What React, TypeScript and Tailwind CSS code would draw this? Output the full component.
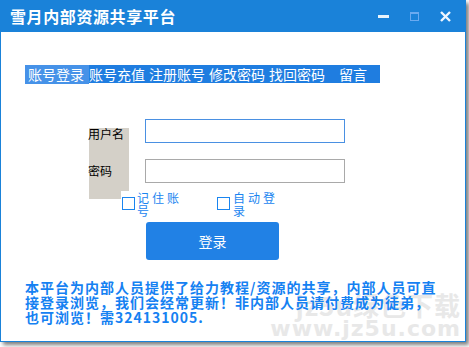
import { useState } from "react";

const tabs = ["账号充值", "注册账号", "修改密码", "找回密码"];

const App = () => {
  const [active] = useState("账号登录");
  const cjk = { fontFamily: '"Noto Sans CJK SC", "Noto Sans", sans-serif' };

  return (
    <div className="w-[469px] h-[347px] bg-white overflow-hidden" style={cjk}>
      <div className="relative w-[466px] h-[342px] flex flex-col bg-white border-x border-b border-[#1a82d9] shadow-[3px_3px_4px_rgba(0,0,0,0.5)]">
        {/* title bar */}
        <div className="h-[32px] shrink-0 bg-[#1a82d9] flex items-center justify-between pl-[9px] pr-[14px]">
          <span className="text-white text-[16px] font-bold tracking-[0.6px] leading-none">
            雪月内部资源共享平台
          </span>
          <div className="flex items-center gap-[21px]">
            <div className="w-[11px] h-[3px] bg-white/90" />
            <div className="w-[9px] h-[9px] border border-[#6aaaf0] border-t-[2px]" />
            <svg width="11" height="11" viewBox="0 0 11 11">
              <path d="M1 1 L10 10 M10 1 L1 10" stroke="#eef6ff" strokeWidth="2.4" />
            </svg>
          </div>
        </div>

        {/* tabs */}
        <div className="flex items-start mt-[33px] ml-[24px]">
          <div className="h-[19px] w-[64px] pl-[3px] bg-[#4692e8] text-white text-[14px] leading-[18px]">
            {active}
          </div>
          <div className="h-[18px] flex bg-[#1f7de0] text-white text-[14px] leading-[18px] pr-[13px]">
            {tabs.map((t, i) => (
              <span key={t} className={i === 0 ? "" : "ml-[4px]"}>
                {t}
              </span>
            ))}
            <span className="ml-[14px]">留言</span>
          </div>
        </div>

        {/* form */}
        <div className="flex items-start mt-[35px] ml-[88px]">
          <div className="mt-[9px] w-[40px] h-[71px] bg-[#d4d0c8] text-black text-[12px] leading-[14px]">
            <div className="-mt-[1px] -ml-[1px]">用户名</div>
            <div className="mt-[23px] -ml-[1px]">密码</div>
          </div>
          <div className="ml-[16px] flex flex-col">
            <input className="w-[200px] h-[24px] border border-[#4a90e2] outline-none px-1 text-[12px]" />
            <input
              type="password"
              className="mt-[16px] w-[200px] h-[24px] border border-[#a9a9a9] outline-none px-1 text-[12px]"
            />
          </div>
        </div>

        {/* checkboxes */}
        <div className="relative -mt-[8px] ml-[120px] h-[24px] flex text-[#1a85f0] text-[12px] leading-[13px] tracking-[3px]">
          <label className="flex items-start bg-white w-[80px] h-[24px]">
            <span className="mt-[6px] ml-[1px] w-[13px] h-[13px] border-[1.5px] border-[#1a85f0]" />
            <span className="ml-[2px]">
              记住账
              <br />号
            </span>
          </label>
          <label className="flex items-start ml-[16px] h-[24px]">
            <span className="mt-[6px] w-[13px] h-[13px] border-[1.5px] border-[#1a85f0]" />
            <span className="ml-[3px]">
              自动登
              <br />录
            </span>
          </label>
        </div>

        {/* login */}
        <button className="mt-[7px] ml-[145px] w-[133px] h-[38px] rounded-[3px] bg-[#2181e5] text-white text-[14px]">
          登录
        </button>

        {/* info */}
        <div className="relative z-10 mt-[20px] ml-[24px] text-[#1581f2] text-[14px] font-bold leading-[15px] tracking-[1px] whitespace-nowrap">
          <div>本平台为内部人员提供了给力教程/资源的共享，内部人员可直</div>
          <div>接登录浏览，我们会经常更新！非内部人员请付费成为徒弟，</div>
          <div>也可浏览！需324131005.</div>
        </div>

        {/* watermark */}
        <div className="absolute right-[4px] bottom-[2px] flex flex-col items-end text-[#e8e8e8] font-bold pointer-events-none">
          <span className="text-[26px] leading-[28px] tracking-[1px]">jz5u绿色下载</span>
          <span
            className="text-[22px] leading-[20px] tracking-[1px]"
            style={{ fontFamily: '"DejaVu Sans", sans-serif' }}
          >
            www.jz5u.com
          </span>
        </div>
      </div>
    </div>
  );
};

export default App;
